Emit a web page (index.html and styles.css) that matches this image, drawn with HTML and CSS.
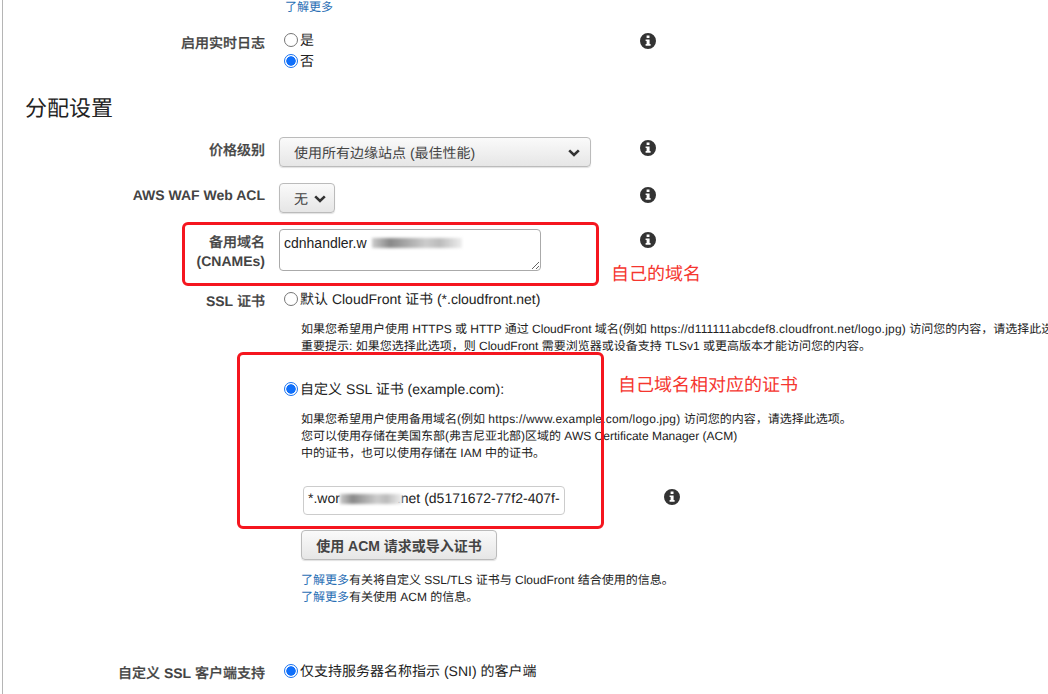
FILE: index.html
```html
<!DOCTYPE html>
<html lang="zh">
<head>
  <meta charset="utf-8">
  <title>分配设置</title>
  <link rel="stylesheet" href="styles.css">
</head>
<body>
<svg class="defs" width="0" height="0">
  <symbol id="info" viewBox="0 0 16 16">
    <path fill-rule="evenodd" fill="#333" d="M8 0a8 8 0 1 1 0 16A8 8 0 0 1 8 0zM6.6 2.6v2.5h2.9V2.6zM5.6 6.4v1.5h1v3.2h-1v1.6h5v-1.6h-1V6.4z"/>
  </symbol>
  <symbol id="chev" viewBox="0 0 12 8">
    <path fill="none" stroke="#333" stroke-width="2.6" d="M1.2 1.4 6 6l4.8-4.6"/>
  </symbol>
</svg>

<main class="page">
  <div class="top-link"><a href="#">了解更多</a></div>

  <!-- 启用实时日志 -->
  <div class="row row-log">
    <div class="label">启用实时日志</div>
    <div class="control radios">
      <label class="radio"><input type="radio" name="log">是</label>
      <label class="radio"><input type="radio" name="log" checked>否</label>
    </div>
    <svg class="info"><use href="#info"/></svg>
  </div>

  <h2 class="section">分配设置</h2>

  <div class="row row-price">
    <div class="label">价格级别</div>
    <div class="control">
      <div class="select select-wide">使用所有边缘站点 (最佳性能)<svg class="chev"><use href="#chev"/></svg></div>
    </div>
    <svg class="info"><use href="#info"/></svg>
  </div>

  <div class="row row-waf">
    <div class="label label-en">AWS WAF Web ACL</div>
    <div class="control">
      <div class="select select-small">无<svg class="chev"><use href="#chev"/></svg></div>
    </div>
    <svg class="info"><use href="#info"/></svg>
  </div>

  <div class="row row-cname">
    <div class="label">备用域名<br><b>(CNAMEs)</b></div>
    <div class="control">
      <div class="cname-wrap">
        <textarea class="cname" spellcheck="false">cdnhandler.w</textarea>
        <span class="smudge smudge-cname"></span>
      </div>
    </div>
    <svg class="info"><use href="#info"/></svg>
  </div>

  <div class="row row-ssl">
    <div class="label"><b>SSL</b> 证书</div>
    <div class="control ssl">
      <label class="radio"><input type="radio" name="ssl">默认 CloudFront 证书 (*.cloudfront.net)</label>
      <p class="help help-default">如果您希望用户使用 HTTPS 或 HTTP 通过 CloudFront 域名(例如 <span class="url">https://d111111abcdef8.cloudfront.net/logo.jpg)</span> 访问您的内容，请选择此选项。<br>重要提示: 如果您选择此选项，则 CloudFront 需要浏览器或设备支持 TLSv1 或更高版本才能访问您的内容。</p>

      <label class="radio radio-custom"><input type="radio" name="ssl" checked>自定义 SSL 证书 (example.com):</label>
      <p class="help help-custom">如果您希望用户使用备用域名(例如 <span class="url">https://www.example.com/logo.jpg)</span> 访问您的内容，请选择此选项。<br>您可以使用存储在美国东部(弗吉尼亚北部)区域的 AWS Certificate Manager (ACM)<br>中的证书，也可以使用存储在 IAM 中的证书。</p>

      <div class="cert-row">
        <div class="cert">*.wor<span class="gap"></span>.net (d5171672-77f2-407f-<span class="smudge smudge-cert"></span></div>
        <svg class="info"><use href="#info"/></svg>
      </div>
      <button class="btn" type="button">使用 ACM 请求或导入证书</button>
      <p class="help help-links"><a href="#">了解更多</a>有关将自定义 SSL/TLS 证书与 CloudFront 结合使用的信息。<br><a href="#">了解更多</a>有关使用 ACM 的信息。</p>
    </div>
  </div>

  <div class="row row-sni">
    <div class="label">自定义 <b>SSL</b> 客户端支持</div>
    <div class="control">
      <label class="radio"><input type="radio" name="sni" checked>仅支持服务器名称指示 (SNI) 的客户端</label>
    </div>
  </div>

  <!-- red annotations drawn on top of the screenshot -->
  <div class="mark mark-cname"></div>
  <div class="note note-cname">自己的域名</div>
  <div class="mark mark-cert"></div>
  <div class="note note-cert">自己域名相对应的证书</div>
</main>
</body>
</html>
```

FILE: styles.css
```css
* { box-sizing: border-box; }

html, body {
  margin: 0;
  height: 100%;
  overflow: hidden;
  background: #fff;
}

body {
  font: 14px/17px "Liberation Sans", "Noto Sans CJK SC", sans-serif;
  color: #222;
  text-rendering: geometricPrecision;
}

.defs { position: absolute; }

a { color: #2a6fb5; text-decoration: none; }

.page {
  position: relative;
  width: 1048px;
  height: 694px;
  overflow: hidden;
  margin-left: 2px;
  border-left: 1px solid #b5b5b5;
  margin-right: -3px;
}

/* page is shifted 3px by the rule at left, so column widths allow for that */
.top-link { padding-left: 282px; height: 14px; font-size: 12px; line-height: 15px; }

.row {
  display: flex;
  align-items: flex-start;
}

.label {
  width: 262px;
  flex: none;
  text-align: right;
  font-weight: 500;
  color: #444;
  line-height: 19px;
  -webkit-text-stroke: .25px #444;
}

.label b { -webkit-text-stroke: 0; }
.label-en { font-weight: bold; -webkit-text-stroke: 0; }

.control {
  width: 361px;
  flex: none;
  margin-left: 14px;
}

.info {
  width: 16px;
  height: 16px;
  flex: none;
}

.radio {
  display: flex;
  align-items: center;
  height: 21px;
  margin-left: 5px;
  white-space: nowrap;
  color: #222;
}

.radio input {
  appearance: none;
  width: 14px;
  height: 14px;
  margin: 0 2px 0 0;
  border: 1px solid #767676;
  border-radius: 50%;
  background: #fff;
  flex: none;
  position: relative;
  left: 0;
  top: -1px;
}

.radio input:checked {
  border: 1px solid #1a73f0;
  background: radial-gradient(circle, #0f6ffa 0 4.4px, #fff 5px);
}

/* rows */
.row-log { margin-top: 16px; }
.row-log .label { padding-top: 4px; }
.row-log .info { margin-top: 3px; }

.section {
  margin: 23px 0 0 22px;
  font-size: 22px;
  line-height: 28px;
  font-weight: normal;
  color: #222;
}

.row-price { margin-top: 14px; }
.row-price .label { padding-top: 4px; }
.row-price .info { margin-top: 3px; }

.select, .btn {
  border: 1px solid #bbb;
  border-radius: 4px;
  background: linear-gradient(#fafafa, #e6e6e6);
  box-shadow: 0 1px 1px rgba(0, 0, 0, .12);
  color: #444;
}

.select {
  display: flex;
  align-items: center;
  justify-content: space-between;
  height: 30px;
  padding: 2px 10px 0 14px;
}

.select-wide { width: 312px; }
.select-small { width: 56px; padding-right: 8px; }

.chev { width: 12px; height: 8px; }

.row-waf { margin-top: 16px; }
.row-waf .label { padding-top: 3px; }
.row-waf .info { margin-top: 4px; }

.row-cname { margin-top: 16px; }
.row-cname .label { padding-top: 4px; }
.row-cname .info { margin-top: 3px; }

.cname-wrap { position: relative; width: 262px; }

.cname {
  display: block;
  width: 262px;
  height: 42px;
  padding: 4px;
  margin: 0;
  border: 1px solid #aaa;
  border-radius: 4px;
  font: 14px/18px "Liberation Sans", sans-serif;
  color: #222;
  resize: both;
  outline: none;
}

.smudge {
  position: absolute;
  background: linear-gradient(90deg, #ccc, #888 20%, #aaa 40%, #ccc 60%, #bbb 75%, #eee);
  filter: blur(1.5px);
}

.smudge-cname { left: 93px; top: 9px; width: 90px; height: 10px; }

.row-ssl { margin-top: 18px; }
.row-ssl .label { padding-top: 3px; }

.help {
  margin: 0 0 0 22px;
  font-size: 12px;
  line-height: 17px;
  color: #222;
  white-space: nowrap;
}

.url { letter-spacing: .2px; }

.help-default { margin-top: 11px; }
.radio-custom { margin-top: 24px; }
.help-custom { margin-top: 11px; }

.cert-row {
  display: flex;
  align-items: flex-start;
  gap: 99px;
  width: 400px;
  margin: 24px 0 0 24px;
}

.cert-row .info { margin-top: 3px; }

.cert {
  position: relative;
  width: 262px;
  flex: none;
  height: 29px;
  padding: 0 4px;
  border: 1px solid #ccc;
  border-radius: 4px;
  line-height: 23px;
  white-space: nowrap;
  overflow: hidden;
  background: #fff;
}

.gap { display: inline-block; width: 57px; }
.smudge-cert { left: 36px; top: 7px; width: 62px; height: 10px; }

.btn {
  display: block;
  width: 196px;
  height: 30px;
  margin: 15px 0 0 22px;
  padding: 0;
  font: bold 14px "Liberation Sans", "Noto Sans CJK SC", sans-serif;
}

.help-links { margin-top: 12px; }

.row-sni { margin-top: 55px; }
.row-sni .label { padding-top: 3px; }

/* annotations */
.mark {
  position: absolute;
  border: 3px solid #f5161f;
  border-radius: 6px;
}

.mark-cname { left: 179px; top: 222px; width: 417px; height: 64px; }
.mark-cert { left: 234px; top: 352px; width: 367px; height: 177px; }

.note {
  position: absolute;
  font-size: 18px;
  line-height: 22px;
  color: #f5362f;
  white-space: nowrap;
}

.note-cname { left: 608px; top: 263px; }
.note-cert { left: 615px; top: 374px; }
```
